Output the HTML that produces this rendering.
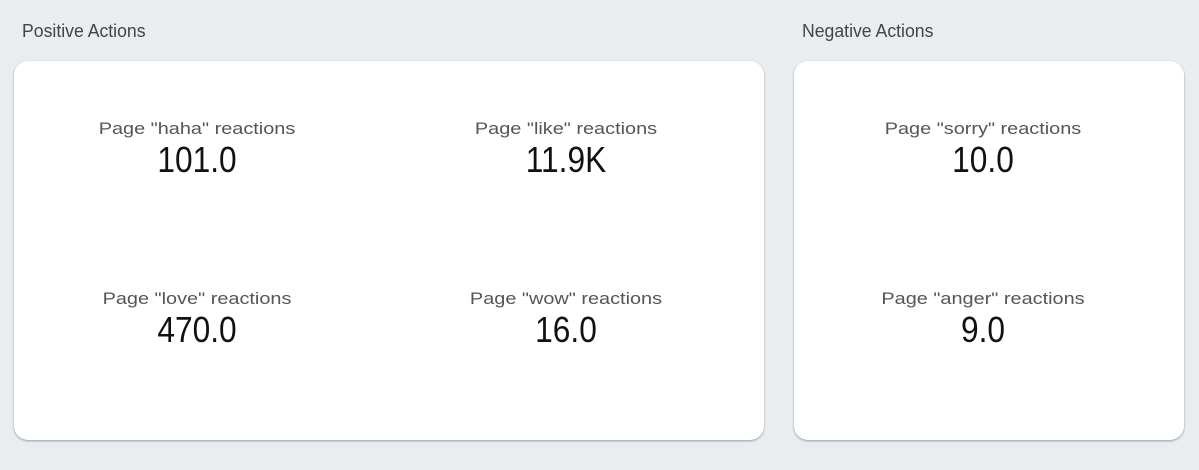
<!DOCTYPE html>
<html><head><style>
body{margin:0;width:1199px;height:470px;background:#e9edf0;position:relative;overflow:hidden;font-family:"Liberation Sans",sans-serif}
.h{position:absolute;top:21px;font-size:18px;color:#444;line-height:20px;transform:scaleX(0.98);transform-origin:left}
.card{position:absolute;top:61px;height:379px;background:#fff;border-radius:14px;box-shadow:0 1px 2px rgba(0,0,0,.35)}
.m{position:absolute;width:300px;margin-left:-150px;text-align:center}
.l{font-size:17px;color:#555;line-height:20px;transform:scaleX(1.17)}
.v{font-size:36px;color:#111;line-height:38px;margin-top:2px;transform:scaleX(0.88)}
</style></head><body>
<div class="h" style="left:22px">Positive Actions</div>
<div class="h" style="left:802px">Negative Actions</div>
<div class="card" style="left:14px;width:750px"></div>
<div class="card" style="left:794px;width:390px"></div>
<div class="m" style="left:197px;top:119px"><div class="l">Page "haha" reactions</div><div class="v">101.0</div></div>
<div class="m" style="left:566px;top:119px"><div class="l">Page "like" reactions</div><div class="v">11.9K</div></div>
<div class="m" style="left:197px;top:289px"><div class="l">Page "love" reactions</div><div class="v">470.0</div></div>
<div class="m" style="left:566px;top:289px"><div class="l">Page "wow" reactions</div><div class="v">16.0</div></div>
<div class="m" style="left:983px;top:119px"><div class="l">Page "sorry" reactions</div><div class="v">10.0</div></div>
<div class="m" style="left:983px;top:289px"><div class="l">Page "anger" reactions</div><div class="v">9.0</div></div>
</body></html>
